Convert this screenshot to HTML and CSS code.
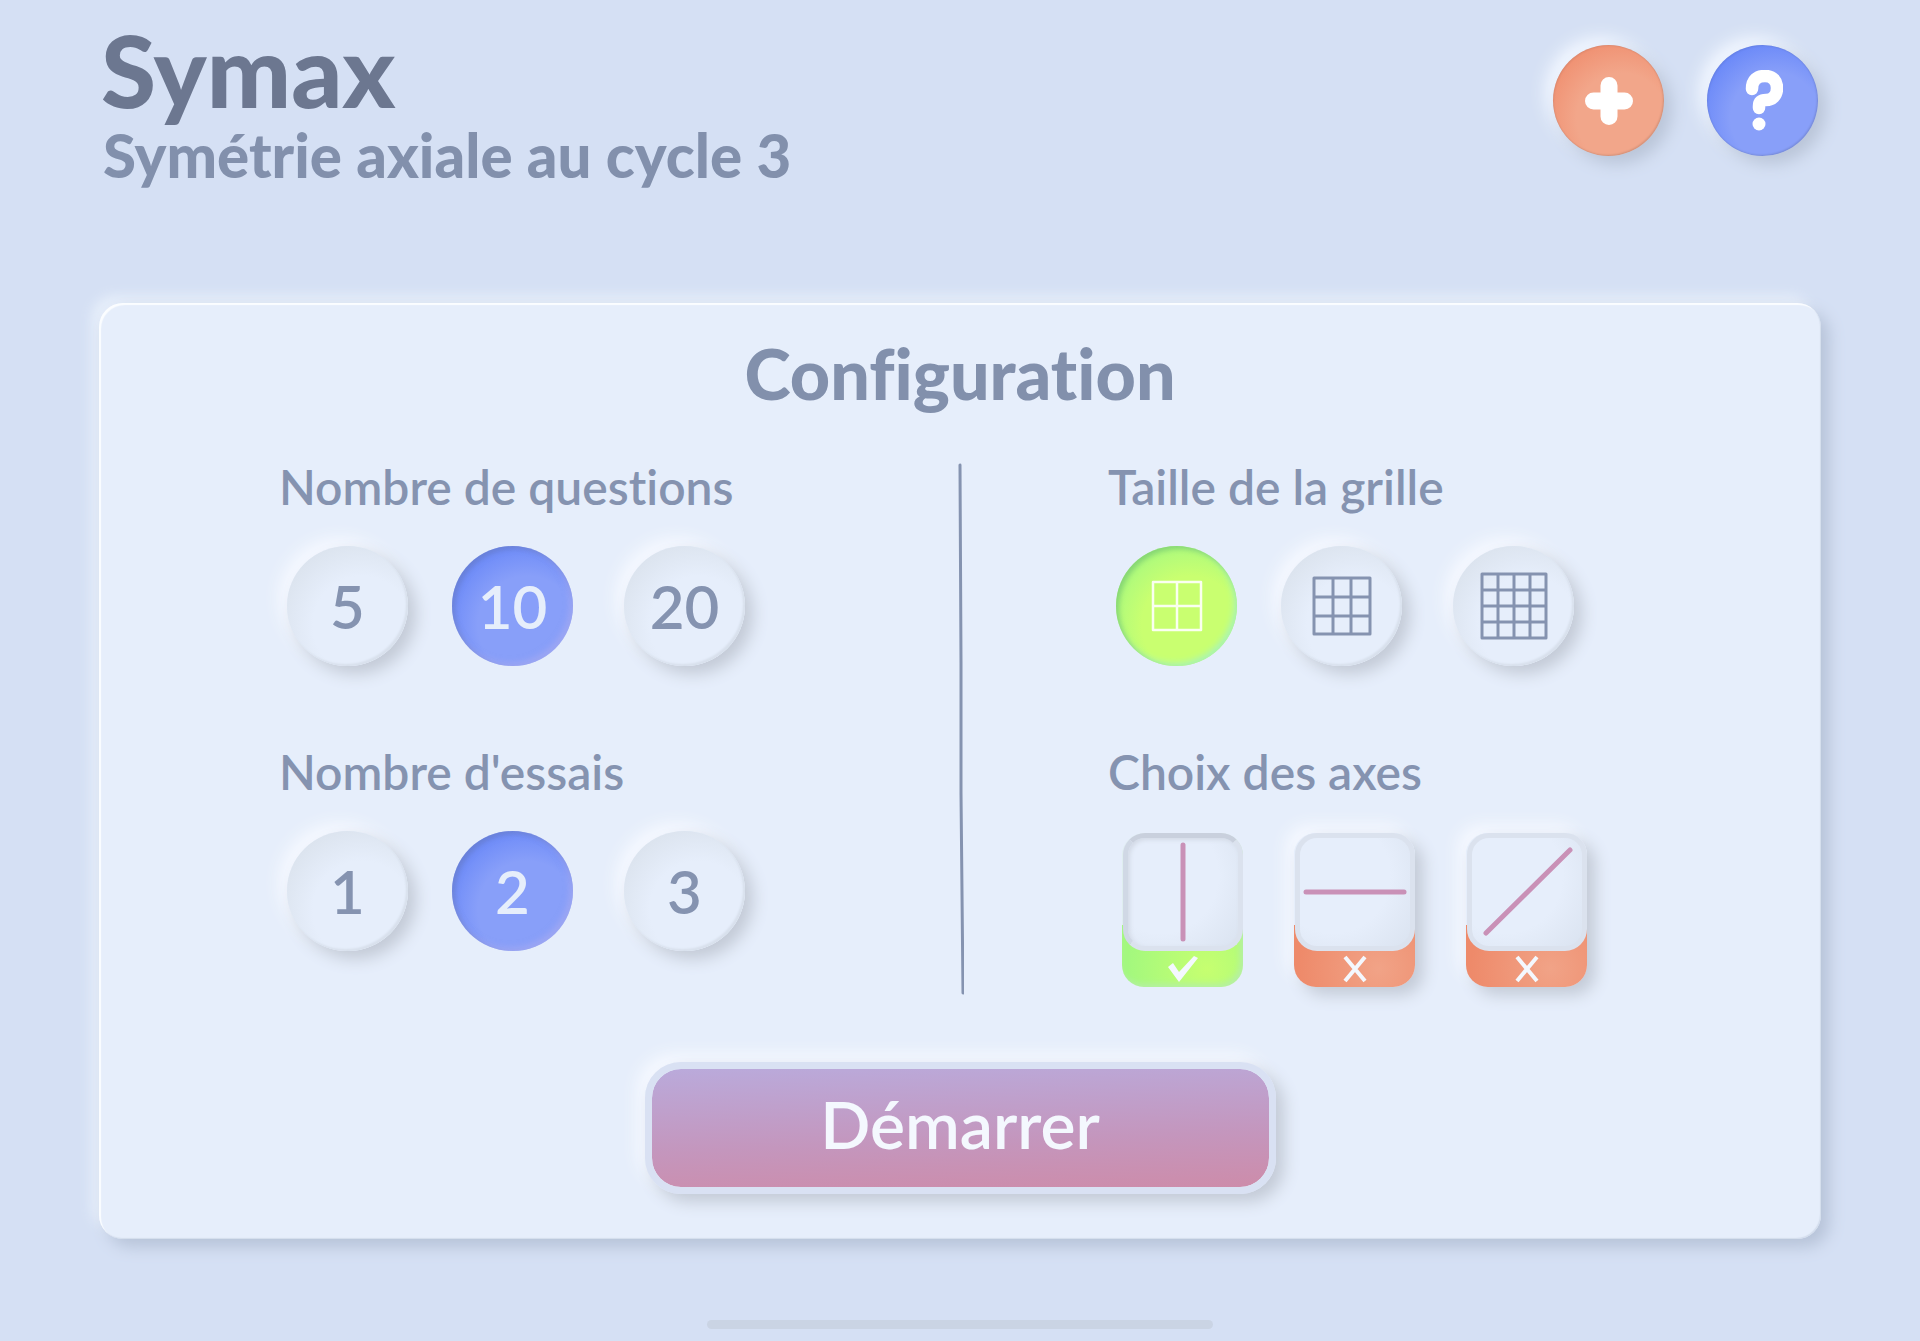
FILE: index.html
```
<!DOCTYPE html>
<html lang="fr">

<head>
    <meta charset="UTF-8">
    <meta name="viewport" content="width=device-width, initial-scale=1.0">
    <title>Symax</title>
    <link rel="stylesheet" href="styles.css">
</head>

<body>
    <header class="top">
        <div class="titles">
            <h1>Symax</h1>
            <p class="subtitle">Symétrie axiale au cycle 3</p>
        </div>
        <div class="actions">
            <button type="button" class="round-btn orange" aria-label="Plus">
                <svg width="48" height="48" viewBox="0 0 48 48">
                    <path d="M24 8.500V39.500M8.500 24H39.500" stroke="#fff" stroke-width="17" stroke-linecap="round" />
                </svg>
            </button>
            <button type="button" class="round-btn blue" aria-label="Aide">
                <svg width="40" height="62" viewBox="0 0 40 62" fill="none">
                    <path d="M9 19C9 10 14 6 22 6C30 6 34 11 34 18C34 26 29 30 23 30C18 30 16 32 16 36V38" stroke="#fff" stroke-width="12.500" stroke-linecap="round" />
                    <circle cx="16" cy="54" r="6.500" fill="#fff" />
                </svg>
            </button>
        </div>
    </header>

    <main class="panel">
        <h2>Configuration</h2>
        <form class="config">
            <div class="columns">
                <div class="column left">
                    <fieldset>
                        <legend>Nombre de questions</legend>
                        <div class="choices">
                            <label class="choice"><input type="radio" name="questions" value="5"><span>5</span></label>
                            <label class="choice"><input type="radio" name="questions" value="10" checked><span>10</span></label>
                            <label class="choice"><input type="radio" name="questions" value="20"><span>20</span></label>
                        </div>
                    </fieldset>
                    <fieldset>
                        <legend>Nombre d'essais</legend>
                        <div class="choices">
                            <label class="choice"><input type="radio" name="essais" value="1"><span>1</span></label>
                            <label class="choice"><input type="radio" name="essais" value="2" checked><span>2</span></label>
                            <label class="choice"><input type="radio" name="essais" value="3"><span>3</span></label>
                        </div>
                    </fieldset>
                </div>

                <svg class="divider" width="8" height="532" viewBox="0 0 8 532" fill="none">
                    <path d="M4 2L5 200L5 330L7 530" stroke="#8593b0" stroke-width="3" stroke-linecap="round" />
                </svg>

                <div class="column right">
                    <fieldset>
                        <legend>Taille de la grille</legend>
                        <div class="choices">
                            <label class="choice green">
                                <input type="radio" name="grille" value="2" aria-label="2 par 2" checked>
                                <span>
                                    <svg width="52" height="52" viewBox="0 0 52 52" fill="none" stroke="currentColor" stroke-width="2.500" stroke-linejoin="round">
                                        <path d="M2 2H50V50H2ZM26 2V50M2 26H50" />
                                    </svg>
                                </span>
                            </label>
                            <label class="choice">
                                <input type="radio" name="grille" value="3" aria-label="3 par 3">
                                <span>
                                    <svg width="60" height="60" viewBox="0 0 60 60" fill="none" stroke="currentColor" stroke-width="3" stroke-linejoin="round">
                                        <path d="M2 2H58V58H2ZM21 2V58M39 2V58M2 21H58M2 40H58" />
                                    </svg>
                                </span>
                            </label>
                            <label class="choice">
                                <input type="radio" name="grille" value="4" aria-label="4 par 4">
                                <span>
                                    <svg width="68" height="68" viewBox="0 0 68 68" fill="none" stroke="currentColor" stroke-width="3" stroke-linejoin="round">
                                        <path d="M2 2H66V66H2ZM18 2V66M34 2V66M50 2V66M2 18H66M2 34H66M2 50H66" />
                                    </svg>
                                </span>
                            </label>
                        </div>
                    </fieldset>
                    <fieldset>
                        <legend>Choix des axes</legend>
                        <div class="axes">
                            <label class="axis">
                                <input type="checkbox" name="axe" value="vertical" aria-label="Axe vertical" checked>
                                <span class="tile">
                                    <svg width="110" height="110" viewBox="0 0 110 110">
                                        <path d="M55 8V102" stroke="#c991b7" stroke-width="5" stroke-linecap="round" />
                                    </svg>
                                </span>
                                <svg class="mark" width="32" height="28" viewBox="0 0 32 28">
                                    <path d="M1 12L6 8L12 17L27 1L31 3L12 27Z" fill="#f4f8fe" />
                                </svg>
                            </label>
                            <label class="axis">
                                <input type="checkbox" name="axe" value="horizontal" aria-label="Axe horizontal">
                                <span class="tile">
                                    <svg width="110" height="110" viewBox="0 0 110 110">
                                        <path d="M6 55H104" stroke="#c991b7" stroke-width="5" stroke-linecap="round" />
                                    </svg>
                                </span>
                                <svg class="mark" width="32" height="28" viewBox="0 0 32 28">
                                    <path d="M6 2L26 26M26 2L6 26" stroke="#f4f8fe" stroke-width="4" />
                                </svg>
                            </label>
                            <label class="axis">
                                <input type="checkbox" name="axe" value="diagonal" aria-label="Axe diagonal">
                                <span class="tile">
                                    <svg width="110" height="110" viewBox="0 0 110 110">
                                        <path d="M14 96L98 13" stroke="#c991b7" stroke-width="5" stroke-linecap="round" />
                                    </svg>
                                </span>
                                <svg class="mark" width="32" height="28" viewBox="0 0 32 28">
                                    <path d="M6 2L26 26M26 2L6 26" stroke="#f4f8fe" stroke-width="4" />
                                </svg>
                            </label>
                        </div>
                    </fieldset>
                </div>
            </div>

            <button type="button" class="start">Démarrer</button>
        </form>
    </main>

    <div class="home-bar"></div>
</body>

</html>
```
FILE: styles.css
```
* {
    margin: 0;
    padding: 0;
    box-sizing: border-box;
}

:root {
    --bg: #d5e0f4;
    --panel: #e6eefb;
    --text: #8593b0;
    --raised: 8px 8px 16px #c3cad6, -8px -8px 16px #f6f9ff;
}

body {
    min-height: 100vh;
    padding: 21px 99px 12px;
    display: flex;
    flex-direction: column;
    background-color: var(--bg);
    color: var(--text);
    font-family: Lato, sans-serif;
    font-variant-ligatures: none;
}

.top {
    display: flex;
    justify-content: space-between;
    align-items: flex-start;
    margin-bottom: 118px;
    padding-right: 3px;
}

h1 {
    padding-left: 2px;
    font-size: 100px;
    font-weight: 900;
    line-height: 96px;
    color: #6c7790;
}

.subtitle {
    margin-top: 8px;
    padding-left: 4px;
    font-size: 60px;
    font-weight: 900;
    line-height: 60px;
    color: #8290ac;
}

.actions {
    display: flex;
    gap: 43px;
    padding-top: 24px;
}

.round-btn {
    width: 111px;
    height: 111px;
    border: none;
    border-radius: 50%;
    display: flex;
    justify-content: center;
    align-items: center;
    cursor: pointer;
    box-shadow: 8px 8px 16px #bac5d8, -8px -8px 16px #f2f7ff, inset -1px -1px 2px #0002, inset 1px 1px 2px #0001;
}

.orange {
    background: radial-gradient(circle at 62% 66%, #f2a68a 45%, #ef8969 90%);
}

.blue {
    background: radial-gradient(circle at 62% 66%, #889ff9 45%, #5f80f8 90%);
}

.panel {
    padding: 34px 0 45px;
    border-radius: 24px;
    background-color: var(--panel);
    box-shadow: 8px 8px 16px #b7c3d8, -8px -8px 12px #e6eefa, inset 2px 2px 1px #fbfdff, inset -1px -1px 1px #d3ddec;
}

h2 {
    font-size: 70px;
    font-weight: 900;
    line-height: 72px;
    text-align: center;
    color: #8290ac;
}

.config {
    display: flex;
    flex-direction: column;
    align-items: center;
}

.columns {
    align-self: stretch;
    display: grid;
    grid-template-columns: 1fr 8px 1fr;
    margin-top: 50px;
}

.left {
    padding-left: 180px;
}

.right {
    padding-left: 144px;
}

.divider {
    margin-top: 4px;
}

fieldset {
    border: none;
}

fieldset + fieldset {
    margin-top: 78px;
}

legend {
    font-size: 48px;
    font-weight: 600;
    line-height: 56px;
}

.choices {
    display: grid;
    grid-template-columns: 165px 172px 121px;
    margin-top: 31px;
    padding-left: 8px;
}

.choice,
.axis {
    position: relative;
    cursor: pointer;
}

.choice {
    width: 121px;
    height: 120px;
}

/* the real input covers its whole button */
.choice input,
.axis input {
    position: absolute;
    inset: 0;
    width: 100%;
    height: 100%;
    opacity: 0;
    cursor: pointer;
}

.choice span {
    height: 100%;
    display: flex;
    justify-content: center;
    align-items: center;
    border-radius: 50%;
    font-size: 60px;
    font-weight: 600;
    background: radial-gradient(circle at 62% 66%, var(--panel) 45%, #d8e0ea 90%);
    box-shadow: var(--raised), inset -2px -2px 2px #d8e0ec;
}

.choice input:checked + span {
    color: #e6eefb;
    background: radial-gradient(circle at 62% 66%, #889ff9 45%, #5f80f8 90%);
    box-shadow: inset 3px 3px 5px #6578bb88, inset -3px -3px 6px #b3aeef88;
}

.green input:checked + span {
    color: #fafff0;
    background: radial-gradient(circle at 62% 66%, #c9ff70 45%, #9df784 90%);
    box-shadow: inset 3px 3px 5px #7ac86fbb, inset -3px -3px 6px #aaf5b4;
}

.axes {
    display: flex;
    gap: 51px;
    margin-top: 33px;
    padding-left: 14px;
}

.axis {
    width: 121px;
    height: 154px;
    display: flex;
    flex-direction: column;
    align-items: center;
    border-radius: 22px;
    background: linear-gradient(var(--panel) 60%, transparent 60%), radial-gradient(circle at 70% 88%, #f1a387, #ee8a6a 80px);
    box-shadow: var(--raised);
}

.axis:has(input:checked) {
    background: linear-gradient(var(--panel) 60%, transparent 60%), radial-gradient(circle at 70% 88%, #c6ff70, #a3f87e 80px);
    box-shadow: inset -3px -3px 6px #b5efa6;
}

.tile {
    width: 120px;
    height: 118px;
    display: flex;
    justify-content: center;
    align-items: center;
    border: 5px solid #dbe2ee;
    border-radius: 22px;
    background: radial-gradient(circle at 30% 35%, var(--panel) 55%, #d5deeb 120%);
}

.axis input:checked + .tile {
    box-shadow: inset 2px 2px 4px #d3dae6;
    border-top-color: #c9d0dd;
    border-left-color: #d0d8e5;
}

.mark {
    margin-top: 4px;
}

.start {
    width: 631px;
    height: 132px;
    margin-top: 67px;
    border: 7px solid #d9e1f3;
    border-radius: 36px;
    background: linear-gradient(178deg, #baaadb, #c496bd 60%, #cd8caa) padding-box;
    box-shadow: var(--raised);
    font-family: inherit;
    font-size: 66px;
    font-weight: 600;
    line-height: 104px;
    padding-bottom: 8px;
    color: #f4f8fe;
    cursor: pointer;
}

.home-bar {
    width: 506px;
    max-width: 100%;
    height: 9px;
    margin: auto auto 0;
    border-radius: 5px;
    background-color: #cad4e4;
}
```
